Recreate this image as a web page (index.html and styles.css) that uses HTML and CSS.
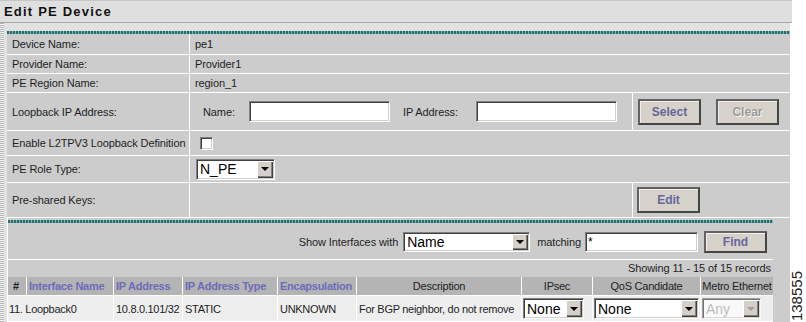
FILE: index.html
```html
<!doctype html>
<html>

<head>
    <meta charset="UTF-8">
    <title>Edit PE Device</title>
    <link rel="stylesheet" href="styles.css">
</head>

<body>
    <div class="title">Edit PE Device</div>
    <div class="frame">
        <div class="panel">
            <div class="teal"></div>
            <table class="form">
                <colgroup>
                    <col class="c-label">
                    <col class="c-value">
                    <col class="c-action">
                </colgroup>
                <tr class="r1"><td>Device Name:</td><td colspan="2">pe1</td></tr>
                <tr class="r2"><td>Provider Name:</td><td colspan="2">Provider1</td></tr>
                <tr class="r3"><td>PE Region Name:</td><td colspan="2">region_1</td></tr>
                <tr class="r4">
                    <td>Loopback IP Address:</td>
                    <td>
                        <div class="pair">
                            <label class="l-name">Name:</label>
                            <input type="text" class="txt w-ip">
                            <label class="l-ip">IP Address:</label>
                            <input type="text" class="txt w-ip">
                        </div>
                    </td>
                    <td class="acts">
                        <input type="button" class="btn" value="Select">
                        <input type="button" class="btn off" value="Clear">
                    </td>
                </tr>
                <tr class="r5"><td>Enable L2TPV3 Loopback Definition</td><td colspan="2" class="chk"><input type="checkbox"></td></tr>
                <tr class="r6">
                    <td>PE Role Type:</td>
                    <td colspan="2" class="role"><span class="combo w-role"><select><option>N_PE</option></select></span></td>
                </tr>
                <tr class="r7">
                    <td>Pre-shared Keys:</td>
                    <td></td>
                    <td class="acts edit"><input type="button" class="btn" value="Edit"></td>
                </tr>
                <tr>
                    <td colspan="3" class="sub">
                        <div class="inner">
                            <div class="teal"></div>
                            <div class="filter">
                                <span>Show Interfaces with</span>
                                <span class="combo w-name"><select><option>Name</option></select></span>
                                <span class="l-match">matching</span>
                                <input type="text" class="txt w-match" value="*">
                                <input type="button" class="btn find" value="Find">
                            </div>
                            <div class="count">Showing 11 - 15 of 15 records</div>
                            <table class="list">
                                <colgroup>
                                    <col style="width:18px">
                                    <col style="width:87px">
                                    <col style="width:69px">
                                    <col style="width:95px">
                                    <col style="width:79px">
                                    <col style="width:165px">
                                    <col style="width:71px">
                                    <col style="width:108px">
                                    <col style="width:73px">
                                </colgroup>
                                <tr>
                                    <th class="num">#</th>
                                    <th class="sort">Interface Name</th>
                                    <th class="sort">IP Address</th>
                                    <th class="sort">IP Address Type</th>
                                    <th class="sort">Encapsulation</th>
                                    <th class="mid">Description</th>
                                    <th class="mid">IPsec</th>
                                    <th class="mid">QoS Candidate</th>
                                    <th class="mid">Metro Ethernet</th>
                                </tr>
                                <tr>
                                    <td colspan="2">11. Loopback0</td>
                                    <td>10.8.0.101/32</td>
                                    <td>STATIC</td>
                                    <td>UNKNOWN</td>
                                    <td>For BGP neighbor, do not remove</td>
                                    <td class="sel"><span class="combo w-ipsec"><select><option>None</option></select></span></td>
                                    <td class="sel"><span class="combo w-qos"><select><option>None</option></select></span></td>
                                    <td class="sel"><span class="combo off w-metro"><select disabled><option>Any</option></select></span></td>
                                </tr>
                            </table>
                        </div>
                    </td>
                </tr>
            </table>
        </div>
    </div>
    <div class="figno">138555</div>
</body>

</html>
```

FILE: styles.css
```css
* {
    box-sizing: border-box;
}
html, body {
    margin: 0;
    padding: 0;
    overflow: hidden;
}
body {
    position: relative;
    width: 806px;
    height: 322px;
    font-family: "Liberation Sans", Arial, sans-serif;
    font-size: 11px;
    letter-spacing: -0.1px;
    color: #1e1e1e;
    background-color: #fff;
}

/** Bandeau de titre */
.title {
    width: 792px;
    height: 23px;
    padding: 3px 0 0 4px;
    background-color: #dfdfdf;
    border-top: 1px solid #c6c6c6;
    border-bottom: 1px solid #a9a9a9;
    font-size: 13px;
    font-weight: bold;
    letter-spacing: 1.2px;
    line-height: 16px;
    color: #111;
}
.frame {
    width: 790px;
    height: 299px;
    padding: 8px 0 0 7px;
    background-color: #e2e2e2;
    background-image: repeating-linear-gradient(180deg, #b4b4b4 0 1px, #f4f4f4 1px 2px);
    background-size: 4px 100%;
    background-repeat: no-repeat;
}
.panel {
    width: 783px;
    background-color: #cccccc;
}
.teal {
    height: 3px;
    background: repeating-linear-gradient(90deg, #256e6e 0 2px, #7fb6b6 2px 3px);
}

/** Formulaire */
table {
    border-collapse: separate;
    border-spacing: 0;
    table-layout: fixed;
}
.form {
    width: 783px;
}
.c-label { width: 182px; }
.c-value { width: 443px; }
.c-action { width: 158px; }
.form td {
    padding: 0 0 0 5px;
    border-bottom: 1px solid #fff;
    vertical-align: middle;
}
.form td + td {
    border-left: 1px solid #fff;
}
.r1 { height: 21px; }
.r2 { height: 19px; }
.r3 { height: 19px; }
.r4 { height: 38px; }
.r5 { height: 25px; }
.r6 { height: 27px; }
.r7 { height: 35px; }

.pair {
    display: flex;
    align-items: center;
    padding-left: 8px;
}
.l-name { width: 46px; }
.l-ip { width: 73px; margin-left: 13px; }
.w-ip { width: 141px; height: 21px; }

.form td.acts {
    padding-left: 5px;
}
.acts .btn + .btn {
    margin-left: 12px;
}
.form td.edit {
    padding-left: 4px;
}
.form td.chk {
    padding-left: 10px;
}
.form td.role {
    padding-left: 6px;
}

/** Champs et boutons façon Windows */
.txt {
    margin: 0;
    padding: 0 2px;
    font: 12px "Liberation Sans", Arial, sans-serif;
    background-color: #fff;
    border: 1px solid;
    border-color: #808080 #fff #fff #808080;
    box-shadow: inset 1px 1px 0 #404040, inset -1px -1px 0 #d4d0c8;
    vertical-align: middle;
}
.chk input {
    -webkit-appearance: none;
    appearance: none;
    display: block;
    width: 13px;
    height: 13px;
    margin: 1px 0 0 0;
    background-color: #fff;
    border: 1px solid;
    border-color: #808080 #fff #fff #808080;
    box-shadow: inset 1px 1px 0 #404040, inset -1px -1px 0 #d4d0c8;
}
.btn {
    width: 63px;
    height: 26px;
    margin: 0;
    padding: 0;
    background-color: #d6d2ca;
    border: 2px solid;
    border-color: #626262 #454545 #454545 #626262;
    box-shadow: inset 1px 1px 0 #f2f0ec;
    font: bold 12px "Liberation Sans", Arial, sans-serif;
    color: #66669a;
    vertical-align: middle;
}
.btn.off {
    color: #9a9a9a;
    text-shadow: 1px 1px 0 #f4f4f4;
}

.combo {
    display: inline-block;
    position: relative;
    vertical-align: middle;
}
.combo select {
    -webkit-appearance: none;
    appearance: none;
    display: block;
    width: 100%;
    height: 100%;
    margin: 0;
    padding: 0 0 0 3px;
    font: 14px "Liberation Sans", Arial, sans-serif;
    color: #000;
    background-color: #fff;
    border: 1px solid;
    border-color: #808080 #fff #fff #808080;
    border-radius: 0;
    box-shadow: inset 1px 1px 0 #404040, inset -1px -1px 0 #d4d0c8;
    outline: none;
}
.combo::after {
    content: "";
    position: absolute;
    top: 2px;
    right: 2px;
    bottom: 2px;
    width: 16px;
    background-color: #d4d0c8;
    box-shadow: inset 1px 1px 0 #fff, inset -1px -1px 0 #404040, inset -2px -2px 0 #808080;
}
.combo::before {
    content: "";
    position: absolute;
    z-index: 1;
    top: 50%;
    right: 6px;
    margin-top: -2px;
    border-top: 4px solid #000;
    border-left: 4px solid transparent;
    border-right: 4px solid transparent;
}
.combo.off select {
    color: #a8a8a8;
}
.combo.off::before {
    border-top-color: #a0a0a0;
}
.w-role { width: 79px; height: 21px; }
.w-name { width: 127px; height: 20px; }
.w-ipsec { width: 61px; height: 21px; }
.w-qos { width: 105px; height: 21px; }
.w-metro { width: 59px; height: 21px; }

/** Liste des interfaces */
.form td.sub {
    padding: 2px 17px 0 0;
    border-bottom: none;
    border-left: 1px solid #fff;
    vertical-align: top;
}
.inner {
    background-color: #cccccc;
}
.filter {
    display: flex;
    align-items: center;
    justify-content: flex-end;
    height: 37px;
    padding: 2px 6px 0 0;
    border-bottom: 1px solid #fff;
}
.filter .combo { margin-left: 5px; }
.l-match { margin-left: 7px; }
.w-match { width: 113px; height: 20px; margin-left: 4px; }
.btn.find { height: 22px; margin-left: 6px; }
.count {
    height: 17px;
    padding-right: 2px;
    line-height: 17px;
    text-align: right;
}
.list {
    width: 765px;
}
.list th {
    height: 18px;
    padding: 0 0 0 2px;
    background-color: #b4b4b4;
    font-weight: normal;
    text-align: left;
    letter-spacing: -0.25px;
    white-space: nowrap;
    color: #222;
}
.list th + th {
    border-left: 1px solid #fff;
}
.list th.num {
    padding-left: 5px;
    font-weight: bold;
}
.list th.sort {
    font-weight: bold;
    color: #6b6bbb;
}
.list th.mid {
    text-align: center;
    padding: 0;
}
.list td {
    height: 27px;
    padding: 0 0 0 2px;
    background-color: #eeeeee;
    border-top: 1px solid #fff;
    letter-spacing: -0.3px;
    white-space: nowrap;
    overflow: hidden;
}
.list td + td {
    border-left: 1px solid #fff;
}
.list td:first-child {
    padding-left: 1px;
}
.list td.sel {
    padding-left: 1px;
}

/** Numéro de figure */
.figno {
    position: absolute;
    right: 1px;
    bottom: 1px;
    writing-mode: vertical-rl;
    transform: rotate(180deg);
    font-size: 15px;
    letter-spacing: 0;
    color: #222;
}
```
